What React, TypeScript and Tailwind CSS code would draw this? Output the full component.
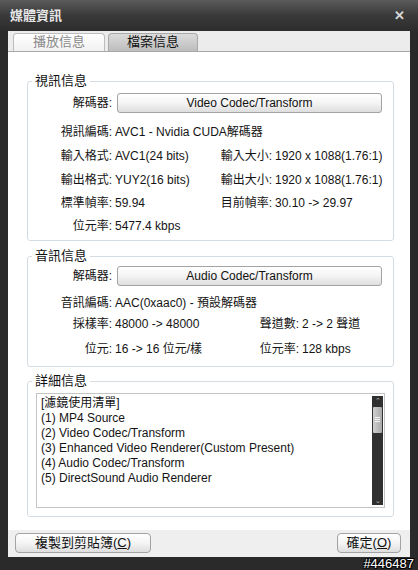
import * as React from "react"

const font = "font-['Liberation_Sans','Noto_Sans_CJK_TC',sans-serif]"

function Btn({ children, className }: { children: React.ReactNode; className?: string }) {
  return (
    <div
      className={`flex h-[20px] items-center justify-center rounded-[3px] border border-[#a3a3a3] bg-gradient-to-b from-white via-[#f4f4f4] to-[#dedede] text-[12px] text-[#111] ${className ?? ""}`}
    >
      {children}
    </div>
  )
}

function Group({ title, className, children }: { title: string; className?: string; children: React.ReactNode }) {
  return (
    <div className={`relative rounded-[3px] border border-[#d6dde2] ${className ?? ""}`}>
      <span className="absolute -top-[9px] left-[4px] bg-white px-[3px] text-[13px] leading-[16px] text-[#111]">
        {title}
      </span>
      {children}
    </div>
  )
}

function Row({
  label,
  value,
  h,
  leftW = "w-[189px]",
  right,
}: {
  label: string
  value: string
  h: string
  leftW?: string
  right?: React.ReactNode
}) {
  return (
    <div className={`flex items-center whitespace-nowrap ${h}`}>
      <div className={`flex shrink-0 items-center ${leftW}`}>
        <span className="w-[84px] shrink-0 text-right">{label}</span>
        <span className="ml-[3px]">{value}</span>
      </div>
      {right}
    </div>
  )
}

function Pair({ label, value, w }: { label: string; value: string; w: string }) {
  return (
    <div className="flex items-center whitespace-nowrap">
      <span className={`shrink-0 text-right ${w}`}>{label}</span>
      <span className="ml-[3px]">{value}</span>
    </div>
  )
}

const filters = [
  "[濾鏡使用清單]",
  "(1) MP4 Source",
  "(2) Video Codec/Transform",
  "(3) Enhanced Video Renderer(Custom Present)",
  "(4) Audio Codec/Transform",
  "(5) DirectSound Audio Renderer",
]

export default function App() {
  return (
    <div className={`flex h-[570px] w-[418px] flex-col bg-[#2a2a2a] ${font} text-[12px] text-[#141414]`}>
      {/* title bar */}
      <div className="flex h-[32px] items-center justify-between bg-gradient-to-b from-[#5b5b5b] via-[#3a3a3a] to-[#2c2c2c] pl-[10px] pr-[13px]">
        <span className="text-[13px] font-bold text-[#e6e6e6]">媒體資訊</span>
        <span className="text-[13px] font-bold leading-none text-[#d8d8d8]">✕</span>
      </div>

      <div className="mx-[8px] flex flex-1 flex-col bg-white">
        {/* tabs */}
        <div className="flex h-[21px] items-end gap-[3px] border-b border-[#a8a8a8] bg-[#ececec] pl-[5px]">
          <div className="flex h-[18px] w-[92px] items-center justify-center rounded-t-[4px] border border-b-0 border-[#bdbdbd] bg-gradient-to-b from-white to-[#f1f1f1] text-[13px] text-[#8a8a8a]">
            播放信息
          </div>
          <div className="flex h-[18px] w-[90px] items-center justify-center rounded-t-[4px] border border-b-0 border-[#a9a9a9] bg-gradient-to-b from-[#dcdcdc] to-[#bdbdbd] text-[13px] text-[#111]">
            檔案信息
          </div>
        </div>

        <div className="flex flex-1 flex-col pl-[19px] pr-[16px] pt-[29px]">
          <Group title="視訊信息" className="h-[160px]">
            <div className="mt-[11px] flex h-[20px] items-center">
              <span className="w-[84px] text-right">解碼器:</span>
              <Btn className="ml-[5px] w-[265px]">Video Codec/Transform</Btn>
            </div>
            <div className="mt-[8px]">
              <Row label="視訊編碼:" value="AVC1 - Nvidia CUDA解碼器" h="h-[23px]" />
              <Row
                label="輸入格式:"
                value="AVC1(24 bits)"
                h="h-[24px]"
                right={<Pair label="輸入大小:" value="1920 x 1088(1.76:1)" w="w-[55px]" />}
              />
              <Row
                label="輸出格式:"
                value="YUY2(16 bits)"
                h="h-[24px]"
                right={<Pair label="輸出大小:" value="1920 x 1088(1.76:1)" w="w-[55px]" />}
              />
              <Row
                label="標準幀率:"
                value="59.94"
                h="h-[23px]"
                right={<Pair label="目前幀率:" value="30.10 -> 29.97" w="w-[55px]" />}
              />
              <Row label="位元率:" value="5477.4 kbps" h="h-[22px]" />
            </div>
          </Group>

          <Group title="音訊信息" className="mt-[15px] h-[111px]">
            <div className="mt-[9px] flex h-[20px] items-center">
              <span className="w-[84px] text-right">解碼器:</span>
              <Btn className="ml-[5px] w-[265px]">Audio Codec/Transform</Btn>
            </div>
            <div className="mt-[6px]">
              <Row label="音訊編碼:" value="AAC(0xaac0) - 預設解碼器" h="h-[22px]" />
              <Row
                label="採樣率:"
                value="48000 -> 48000"
                h="h-[21px]"
                leftW="w-[224px]"
                right={<Pair label="聲道數:" value="2 -> 2 聲道" w="w-[47px]" />}
              />
              <Row
                label="位元:"
                value="16 -> 16 位元/樣"
                h="h-[28px]"
                leftW="w-[224px]"
                right={<Pair label="位元率:" value="128 kbps" w="w-[47px]" />}
              />
            </div>
          </Group>

          <Group title="詳細信息" className="mt-[14px] h-[136px] px-[8px] pt-[11px]">
            <div className="flex h-[115px] border border-[#c4c4c4] bg-white">
              <div className="flex-1 pl-[4px] pt-[2px] leading-[15px]">
                {filters.map((f) => (
                  <div key={f}>{f}</div>
                ))}
              </div>
              <div className="my-[2px] mr-[1px] flex w-[11px] flex-col bg-[#303030]">
                <div className="flex h-[9px] items-center justify-center text-[7px] leading-none text-[#bbb]">⌃</div>
                <div className="mx-[1px] mt-[2px] flex h-[26px] flex-col items-center justify-center gap-[1px] rounded-[1px] bg-gradient-to-r from-[#cfcfcf] to-[#a9a9a9]">
                  <div className="h-px w-[5px] bg-[#f4f4f4]" />
                  <div className="h-px w-[5px] bg-[#f4f4f4]" />
                  <div className="h-px w-[5px] bg-[#f4f4f4]" />
                </div>
                <div className="flex-1" />
                <div className="flex h-[9px] items-center justify-center text-[7px] leading-none text-[#bbb]">⌄</div>
              </div>
            </div>
          </Group>
        </div>

        {/* footer */}
        <div className="mt-[13px] flex h-[27px] items-center justify-between bg-[#efefef] pl-[7px] pr-[9px]">
          <Btn className="w-[136px] rounded-[4px] text-[13px]">
            複製到剪貼簿(<span className="underline">C</span>)
          </Btn>
          <Btn className="w-[64px] rounded-[4px] text-[13px]">
            確定(<span className="underline">O</span>)
          </Btn>
        </div>
      </div>

      <div className="flex h-[14px] items-center justify-end pr-[4px]">
        <span className="text-[13px] leading-none text-white [text-shadow:1px_1px_0_#000,-1px_-1px_0_#000,1px_-1px_0_#000,-1px_1px_0_#000]">
          #446487
        </span>
      </div>
    </div>
  )
}
